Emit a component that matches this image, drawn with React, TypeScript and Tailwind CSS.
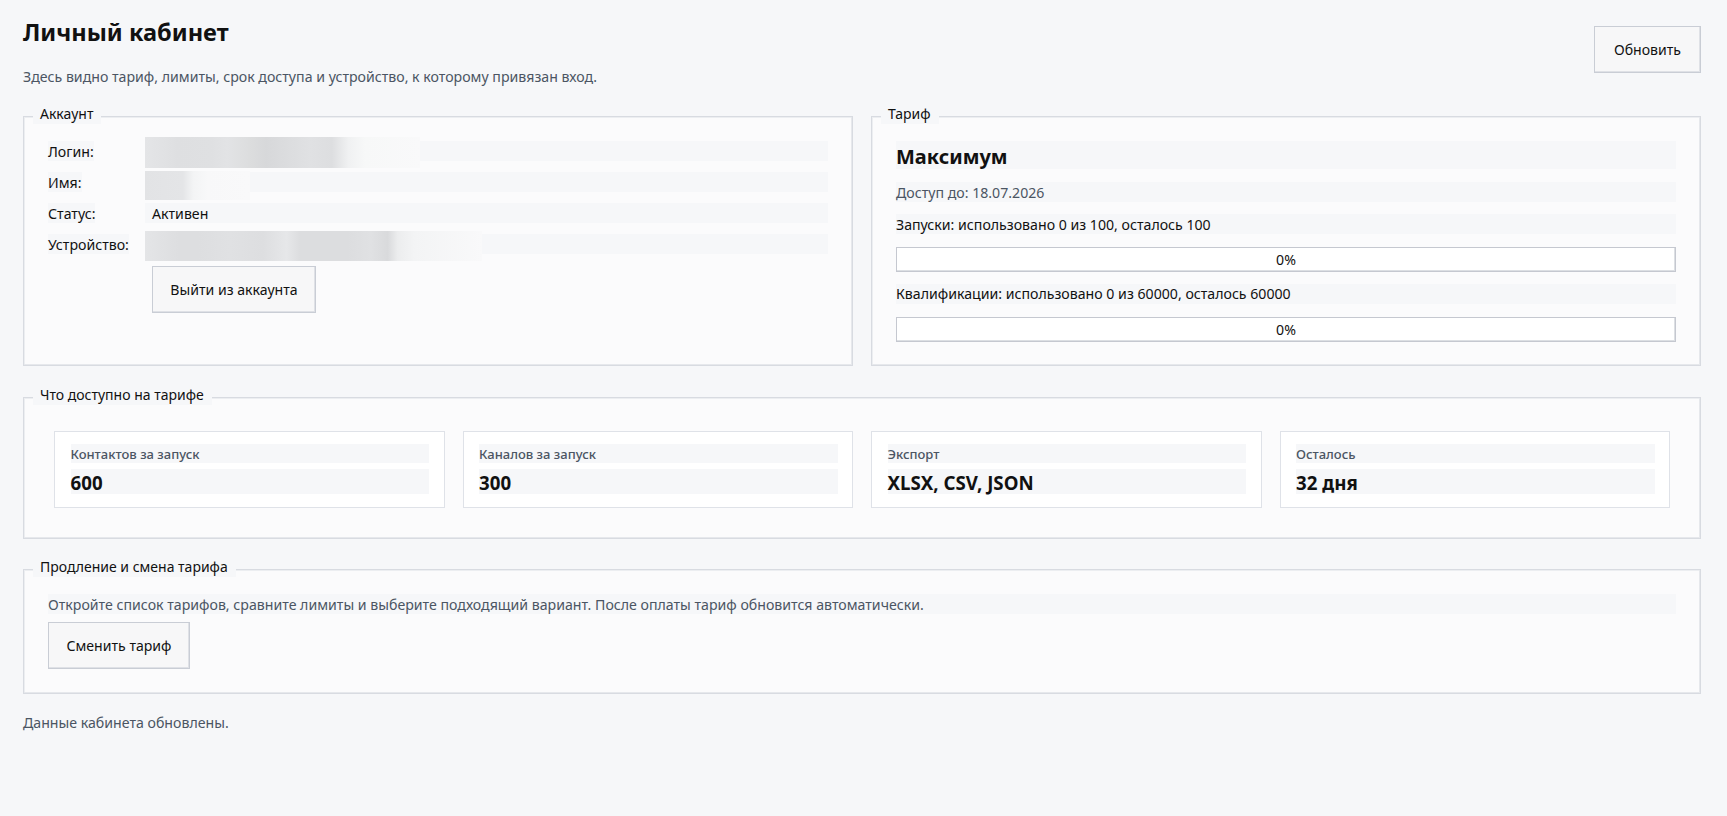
const font = "font-['Noto_Sans','Open_Sans',sans-serif]";

function Panel({ title, className, children }: { title: string; className?: string; children: React.ReactNode }) {
  return (
    <section className={`relative border border-[#d8dbe1] bg-[#fbfbfc] shadow-[inset_-1px_-1px_0_#e6e8ec,inset_1px_1px_0_#eceef1] ${className ?? ''}`}>
      <span className="absolute left-[9px] top-[-13px] bg-[#f6f7f9] pl-[7px] pr-[8px] text-[14px] leading-[20px] text-[#111111]">{title}</span>
      {children}
    </section>
  );
}

function Btn({ children, className }: { children: React.ReactNode; className?: string }) {
  return (
    <button className={`h-[47px] border border-[#c9cdd5] bg-[#f7f7f8] text-[14.1px] text-[#111111] shadow-[inset_-1px_-1px_0_#dfe1e6] ${className ?? ''}`}>
      {children}
    </button>
  );
}

function InfoRow({ label, value, blur }: { label: string; value?: string; blur?: React.ReactNode }) {
  return (
    <div className="relative flex h-[20px] items-start">
      <span className="block w-[97px] shrink-0"><span className="block h-[20px] w-fit bg-[#f6f7f9] text-[14.15px] leading-[22px]">{label}</span></span>
      <span className="h-[20px] flex-1 bg-[#f6f7f9] pl-[7px] text-[14.15px] leading-[22px]">{value}</span>
      {blur}
    </div>
  );
}

function Progress() {
  return (
    <div className="flex h-[25px] items-center justify-center border border-[#c5c8d0] bg-white text-[14.15px] text-[#111111] shadow-[inset_-1px_-1px_0_#dcdfe3]">0%</div>
  );
}

function Stat({ label, value }: { label: string; value: string }) {
  return (
    <div className="flex-1 border border-[#dfe2e8] bg-white pb-[13px] pl-[15.5px] pr-[14.5px] pt-[12px]">
      <div className="h-[19px] bg-[#f6f7f9] text-[13px] font-medium leading-[21px] text-[#4b5563]">{label}</div>
      <div className="mt-[6px] h-[25px] bg-[#f6f7f9] text-[18.7px] font-bold leading-[28px] text-[#111111]">{value}</div>
    </div>
  );
}

export default function App() {
  return (
    <div className={`min-h-[816px] overflow-hidden bg-[#f6f7f9] pl-[23px] pr-[26px] text-[#111111] ${font}`}>
      <header className="flex h-[116px] items-start justify-between">
        <div>
          <h1 className="mt-[16px] text-[23.6px] font-bold leading-[33px]">Личный кабинет</h1>
          <p className="mt-[18px] text-[14.15px] leading-[20px] text-[#4b5563]">
            Здесь видно тариф, лимиты, срок доступа и устройство, к которому привязан вход.
          </p>
        </div>
        <Btn className="mt-[26px] w-[107px]">Обновить</Btn>
      </header>

      <div className="flex gap-[18px]">
        <Panel title="Аккаунт" className="h-[250px] w-[830px] px-[24px] pt-[24px]">
          <div className="flex flex-col gap-[11px]">
            <InfoRow
              label="Логин:"
              blur={<div className="absolute left-[97px] top-[-4px] h-[31px] w-[275px] bg-[linear-gradient(90deg,#e4e5e7_0%,#dedfe1_12%,#dfe0e2_24%,#e2e3e5_30%,#dcddde_38%,#d7d8da_44%,#e0e1e3_60%,#dddee0_68%,#f0f1f2_74%,#f7f8f8_80%,#f9f9fa_100%)]" />}
            />
            <InfoRow
              label="Имя:"
              blur={<div className="absolute left-[97px] top-[-1px] h-[29px] w-[105px] bg-[linear-gradient(90deg,#e2e3e5_0%,#e4e5e7_36%,#f3f4f5_46%,#f8f8f9_60%,#f9f9fa_100%)]" />}
            />
            <InfoRow label="Статус:" value="Активен" />
            <InfoRow
              label="Устройство:"
              blur={<div className="absolute left-[97px] top-[-3px] h-[30px] w-[337px] bg-[linear-gradient(90deg,#e4e5e7_0%,#dddee0_10%,#dddee0_16%,#e0e1e3_25%,#dddee0_35%,#e6e7e9_42%,#dcdddf_46%,#dcdddf_60%,#e0e1e3_67%,#d9dadc_72%,#ecedee_75%,#f3f4f5_80%,#f9f9fa_100%)]" />}
            />
          </div>
          <Btn className="ml-[104px] mt-[12px] w-[164px]">Выйти из аккаунта</Btn>
        </Panel>

        <Panel title="Тариф" className="h-[250px] flex-1 px-[24px] pt-[24px]">
          <div className="h-[28px] bg-[#f6f7f9] text-[20px] font-bold leading-[32px]">Максимум</div>
          <div className="mt-[13px] h-[20px] bg-[#f6f7f9] text-[14.15px] leading-[22px] text-[#4b5563]">Доступ до: 18.07.2026</div>
          <div className="mt-[12px] h-[20px] bg-[#f6f7f9] text-[14.15px] leading-[22px]">Запуски: использовано 0 из 100, осталось 100</div>
          <div className="mt-[13px]"><Progress /></div>
          <div className="mt-[12px] h-[20px] bg-[#f6f7f9] text-[14.15px] leading-[20px]">Квалификации: использовано 0 из 60000, осталось 60000</div>
          <div className="mt-[13px]"><Progress /></div>
        </Panel>
      </div>

      <Panel title="Что доступно на тарифе" className="mt-[31px] h-[142px] px-[30px] pt-[33px]">
        <div className="flex gap-[18px]">
          <Stat label="Контактов за запуск" value="600" />
          <Stat label="Каналов за запуск" value="300" />
          <Stat label="Экспорт" value="XLSX, CSV, JSON" />
          <Stat label="Осталось" value="32 дня" />
        </div>
      </Panel>

      <Panel title="Продление и смена тарифа" className="mt-[30px] h-[125px] px-[24px] pt-[24px]">
        <div className="h-[20px] bg-[#f6f7f9] text-[14.15px] leading-[22px] text-[#4b5563]">
          Откройте список тарифов, сравните лимиты и выберите подходящий вариант. После оплаты тариф обновится автоматически.
        </div>
        <Btn className="mt-[8px] w-[142px]">Сменить тариф</Btn>
      </Panel>

      <p className="mt-[19px] text-[14.15px] leading-[20px] text-[#4b5563]">Данные кабинета обновлены.</p>
    </div>
  );
}
